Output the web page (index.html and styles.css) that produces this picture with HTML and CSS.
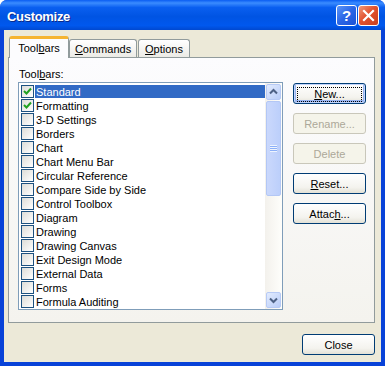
FILE: index.html
```html
<!DOCTYPE html>
<html lang="en">
<head>
  <meta charset="UTF-8" />
  <title>Customize</title>
  <link rel="stylesheet" href="styles.css">
</head>
<body>

  <div class="window">
    <div class="titlebar">
      <span class="title">Customize</span>
      <div class="title-buttons">
        <span class="tbtn help">?</span>
        <span class="tbtn close">
          <svg width="21" height="21" viewBox="0 0 21 21"><path d="M6 6 L15 15 M15 6 L6 15" stroke="#fff" stroke-width="2.2" stroke-linecap="square" fill="none"/></svg>
        </span>
      </div>
    </div>

    <div class="client">
      <div class="tabs">
        <div class="tab active">Tool<u>b</u>ars</div>
        <div class="tab commands"><u>C</u>ommands</div>
        <div class="tab options"><u>O</u>ptions</div>
      </div>

      <div class="panel">
        <div class="list-col">
          <div class="label">Tool<u>b</u>ars:</div>
          <div class="listbox">
            <div class="items" id="items"></div>
            <div class="scrollbar">
              <div class="sb-btn">
                <svg width="15" height="16" viewBox="0 0 15 16"><path d="M4 9.5 L7.5 6 L11 9.5" stroke="#4d6185" stroke-width="2" fill="none"/></svg>
              </div>
              <div class="sb-thumb">
                <div class="grip"></div>
              </div>
              <div class="sb-track"></div>
              <div class="sb-btn">
                <svg width="15" height="16" viewBox="0 0 15 16"><path d="M4 6.5 L7.5 10 L11 6.5" stroke="#4d6185" stroke-width="2" fill="none"/></svg>
              </div>
            </div>
          </div>
        </div>

        <div class="btn-col">
          <div class="btn default"><span class="focus"><u>N</u>ew...</span></div>
          <div class="btn disabled">Rename...</div>
          <div class="btn disabled">Delete</div>
          <div class="btn"><u>R</u>eset...</div>
          <div class="btn">Attac<u>h</u>...</div>
        </div>
      </div>

      <div class="footer">
        <div class="btn">Close</div>
      </div>
    </div>
  </div>

  <script>
    const toolbars = [
      ['Standard', true], ['Formatting', true], ['3-D Settings', false], ['Borders', false],
      ['Chart', false], ['Chart Menu Bar', false], ['Circular Reference', false],
      ['Compare Side by Side', false], ['Control Toolbox', false], ['Diagram', false],
      ['Drawing', false], ['Drawing Canvas', false], ['Exit Design Mode', false],
      ['External Data', false], ['Forms', false], ['Formula Auditing', false]
    ];
    const check = '<svg width="11" height="11" viewBox="0 0 11 11"><path d="M2 5 L4.5 7.5 L9 2.5" stroke="#21a121" stroke-width="2" fill="none"/></svg>';
    const list = document.getElementById('items');

    toolbars.forEach(([name, on], i) => {
      const row = document.createElement('div');
      row.className = 'row' + (i === 0 ? ' selected' : '');
      row.innerHTML = '<span class="checkbox">' + (on ? check : '') + '</span><span class="name">' + name + '</span>';
      list.appendChild(row);
    });
  </script>

</body>
</html>
```

FILE: styles.css
```css
body {
  margin: 0;
  padding: 0;
  background: #fff;
  font-family: 'Liberation Sans', Arial, sans-serif;
  font-size: 11px;
  color: #000;
}

.window {
  width: 385px;
  height: 366px;
  display: flex;
  flex-direction: column;
  background: #0842d8;
  border-radius: 7px 7px 0 0;
  overflow: hidden;
}

.titlebar {
  height: 30px;
  display: flex;
  align-items: center;
  justify-content: space-between;
  padding: 0 6px 0 7px;
  box-sizing: border-box;
  background: linear-gradient(to bottom, #0a5df2 0%, #3b8cff 10%, #0a5ff0 25%, #0054e3 55%, #0058ee 85%, #0048d0 100%);
}

.title {
  color: #fff;
  font-weight: bold;
  font-size: 13px;
  letter-spacing: -0.3px;
  margin-top: 2px;
  text-shadow: 1px 1px 0 #0a2a8a;
}

.title-buttons {
  display: flex;
  gap: 1px;
  margin-top: 1px;
}

.tbtn {
  width: 21px;
  height: 21px;
  box-sizing: border-box;
  border: 1px solid #fff;
  border-radius: 3px;
  display: flex;
  align-items: center;
  justify-content: center;
}

.tbtn svg {
  margin: -1px;
}

.help {
  background: linear-gradient(135deg, #5c95f8 0%, #2a66e6 50%, #1c52d6 100%);
  color: #fff;
  font-weight: bold;
  font-size: 15px;
}

.close {
  background: linear-gradient(135deg, #f09a7c 0%, #e2522f 45%, #c9401e 100%);
}

.client {
  flex: 1;
  margin: 0 4px 4px;
  background: #ece9d8;
  padding: 6px 0 0 4px;
  box-sizing: border-box;
}

.tabs {
  display: flex;
  align-items: flex-start;
  height: 21px;
  margin-left: 1px;
}

.tab {
  box-sizing: border-box;
  height: 18px;
  margin-top: 3px;
  border: 1px solid #919b9c;
  border-bottom: none;
  border-radius: 3px 3px 0 0;
  background: linear-gradient(to bottom, #fff, #ecebe6);
  text-align: center;
  line-height: 18px;
}

.tab.active {
  position: relative;
  z-index: 1;
  width: 60px;
  height: 22px;
  margin-top: 0;
  border-top: 3px solid #f5b431;
  background: #fcfcfe;
  line-height: 19px;
}

.tab.commands {
  width: 68px;
}

.tab.options {
  width: 52px;
  margin-left: 1px;
}

.panel {
  width: 367px;
  height: 266px;
  box-sizing: border-box;
  border: 1px solid #919b9c;
  background: linear-gradient(to bottom, #fcfcfe, #f4f3ee);
  display: flex;
  align-items: flex-start;
  padding: 9px 0 0 9px;
}

.label {
  height: 13px;
  line-height: 15px;
  margin: 0 0 2px 1px;
}

.listbox {
  width: 265px;
  height: 228px;
  box-sizing: border-box;
  border: 1px solid #7f9db9;
  background: #fff;
  display: flex;
}

.items {
  flex: 1;
  padding-top: 1px;
}

.row {
  height: 14px;
  display: flex;
  align-items: center;
  padding-left: 2px;
}

.checkbox {
  width: 13px;
  height: 13px;
  box-sizing: border-box;
  border: 1px solid #1c5180;
  background: linear-gradient(135deg, #dcdcd7, #fff);
  display: flex;
  align-items: center;
  justify-content: center;
}

.name {
  flex: 1;
  height: 13px;
  line-height: 15px;
  margin-left: 1px;
  padding-left: 1px;
  white-space: nowrap;
}

.row.selected .name {
  background: #316ac5;
  color: #fff;
}

.scrollbar {
  width: 17px;
  box-sizing: border-box;
  padding: 1px;
  background: linear-gradient(to right, #f3f1ec, #fefefb);
  display: flex;
  flex-direction: column;
}

.sb-btn {
  height: 16px;
  box-sizing: border-box;
  border: 1px solid #b7caf5;
  border-radius: 2px;
  background: linear-gradient(135deg, #e2ebfe, #b9cdf8);
  display: flex;
  align-items: center;
  justify-content: center;
}

.sb-btn svg {
  margin: -1px;
}

.sb-thumb {
  height: 95px;
  margin-top: 1px;
  box-sizing: border-box;
  border: 1px solid #b3c7f5;
  border-radius: 2px;
  background: linear-gradient(to right, #cad8fc, #bccffb);
  display: flex;
  align-items: center;
  justify-content: center;
}

.grip {
  width: 7px;
  height: 7px;
  background: repeating-linear-gradient(to bottom, #eef4fe 0, #eef4fe 1px, #8cb0f8 1px, #8cb0f8 2px);
}

.sb-track {
  flex: 1;
}

.btn-col {
  display: flex;
  flex-direction: column;
  gap: 9px;
  margin: 16px 0 0 10px;
}

.btn {
  width: 73px;
  height: 21px;
  box-sizing: border-box;
  padding-top: 2px;
  border: 1px solid #003c74;
  border-radius: 3px;
  background: linear-gradient(to bottom, #fff 0%, #f4f3ee 70%, #e3e1d6 100%);
  display: flex;
  align-items: center;
  justify-content: center;
  line-height: 13px;
}

.btn.default {
  box-shadow: inset 0 0 0 1px #c3d5fd, inset 0 -1px 0 2px #98b4f0;
}

.btn .focus {
  width: 63px;
  height: 13px;
  outline: 1px dotted #000;
  text-align: center;
}

.btn.disabled {
  border-color: #c9c7ba;
  background: #f5f4ea;
  color: #aca899;
}

.footer {
  display: flex;
  justify-content: flex-end;
  margin-top: 11px;
  padding-right: 6px;
}
```
